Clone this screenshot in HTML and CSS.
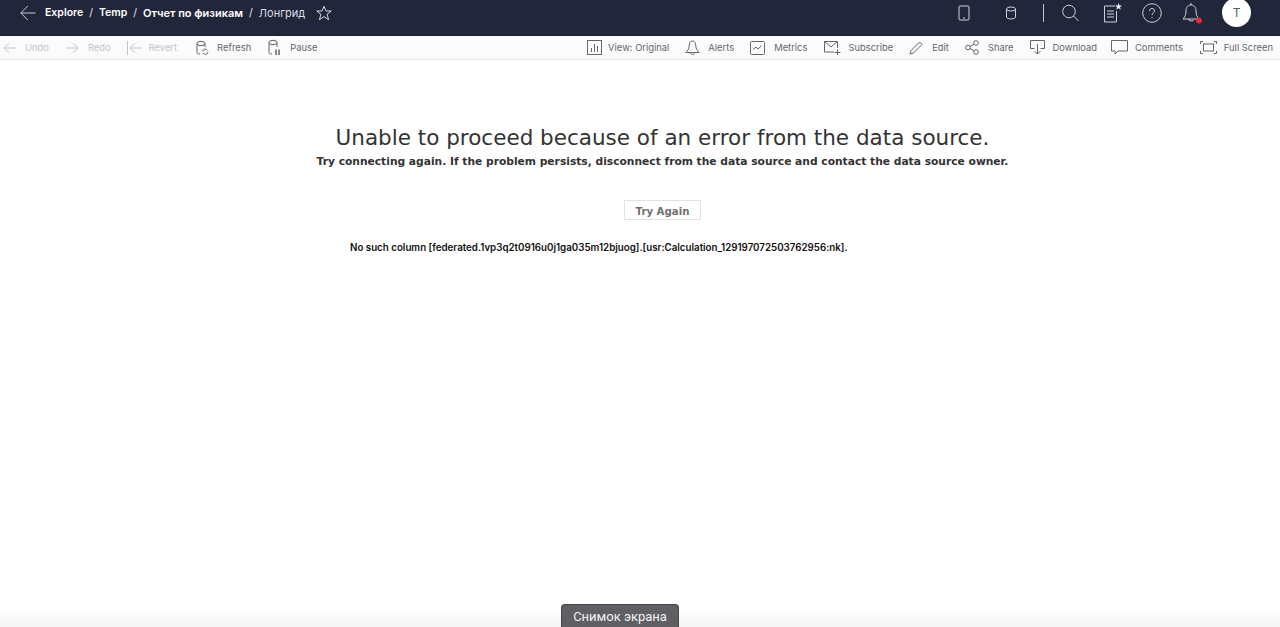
FILE: index.html
```html
<!DOCTYPE html>
<html lang="en">
<head>
<meta charset="utf-8">
<title>Лонгрид</title>
<link rel="stylesheet" href="styles.css">
</head>
<body>
<header class="topbar">
  <div class="crumbs">
    <svg class="back" width="16" height="16" viewBox="0 0 16 16"><path d="M15.500 8H.8M7.800 1 .8 8l7 7" /></svg>
    <b>Explore</b><span class="sep">/</span><b>Temp</b><span class="sep">/</span><b class="cy">Отчет по физикам</b><span class="sep">/</span><span class="page cy">Лонгрид</span>
    <svg class="star" width="16" height="16" viewBox="0 0 16 16"><path d="M8 1.200 10 6h5.200l-4.100 3.300 1.500 5.400L8 11.600l-4.600 3.100 1.500-5.400L.8 6H6z"/></svg>
  </div>
  <div class="top-icons">
    <svg class="ti-phone" width="12" height="16" viewBox="0 0 12 16"><rect x="1" y="1" width="10" height="14" rx="1"/><path d="M5 13h2"/></svg>
    <svg class="ti-db" width="12" height="14" viewBox="0 0 12 14"><ellipse cx="6" cy="3" rx="4.500" ry="2"/><path d="M1.500 3v8c0 1 2 2 4.500 2s4.500-1 4.500-2V3"/></svg>
    <span class="divider"></span>
    <svg class="ti-search" width="17" height="18" viewBox="0 0 17 18"><circle cx="7" cy="7.500" r="6.300"/><path d="m11.500 12 5 5"/></svg>
    <svg class="ti-list" width="20" height="20" viewBox="0 0 20 20"><path d="M12 3H1.500v16h12V8M4 8h7M4 11h7M4 14h7"/><path class="fill" d="m15.500 0 1 2.500h2.500l-2 1.700.8 2.600-2.300-1.500-2.300 1.500.8-2.600-2-1.700h2.500z"/></svg>
    <svg class="ti-help" width="20" height="20" viewBox="0 0 20 20"><circle cx="10" cy="10" r="9.300"/><path d="M7.500 8c0-1.500 1-2.500 2.500-2.500s2.500 1 2.500 2.300c0 2-2.500 2-2.500 4.200M10 14v1.200"/></svg>
    <svg class="ti-bell" width="20" height="22" viewBox="0 0 20 22"><path d="M9 1v2M9 3C5.500 3 4 5.500 4 9c0 3.500-1 6-3 8h16c-2-2-3-4.500-3-8 0-3.500-1.500-6-5-6zM6.500 17c0 2 3 2.500 5 1.500"/><circle class="dot" cx="17" cy="18.500" r="3"/></svg>
    <span class="avatar">T</span>
  </div>
</header>
<nav class="toolbar">
  <div class="group">
    <span class="tool off undo"><svg width="13" height="12" viewBox="0 0 13 12"><path d="M13 6H1M6 1 1 6l5 5"/></svg>Undo</span>
    <span class="tool off redo"><svg width="13" height="12" viewBox="0 0 13 12"><path d="M0 6h12M7 1l5 5-5 5"/></svg>Redo</span>
    <span class="tool off revert"><svg width="15" height="14" viewBox="0 0 15 14"><path d="M.5 0v14M15 7H3M8 2 3 7l5 5"/></svg>Revert</span>
    <span class="tool refresh"><svg width="13" height="16" viewBox="0 0 13 16"><path d="M1 3.500v9c0 1 1 1.500 3 1.500M9 3.500V7"/><ellipse cx="5" cy="3.500" rx="4" ry="2.200"/><path d="M6.500 11.500a2.700 2.700 0 0 1 5-1M12 12a2.700 2.700 0 0 1-5 1"/></svg>Refresh</span>
    <span class="tool pause"><svg width="13" height="17" viewBox="0 0 13 17"><path d="M1 3.500v10c0 1 1 1.500 3 1.500M9 3.500V8"/><ellipse cx="5" cy="3.500" rx="4" ry="2.200"/><path class="thick" d="M8 10.500V16M11 10.500V16"/></svg>Pause</span>
  </div>
  <div class="group">
    <span class="tool view"><svg width="15" height="15" viewBox="0 0 15 15"><rect x=".5" y=".5" width="14" height="14"/><path d="M4.500 8v4M7.500 4v8M10.500 6v6"/></svg>View: Original</span>
    <span class="tool alerts"><svg width="15" height="15" viewBox="0 0 15 15"><path d="M7.500 1C5 1 4.500 3 4.200 6 4 9 2.500 11 .8 12.500h13.400C12.500 11 11 9 10.800 6 10.500 3 10 1 7.500 1zM5.500 12.500c0 1.500 1 2 2 2s2-.5 2-2"/></svg>Alerts</span>
    <span class="tool metrics"><svg width="15" height="14" viewBox="0 0 15 14"><rect x=".5" y=".5" width="14" height="13" rx="1"/><path d="m3.500 8.500 2.500-2.500 2 2 3.500-3.500"/></svg>Metrics</span>
    <span class="tool subscribe"><svg width="17" height="14" viewBox="0 0 17 14"><path d="M10 11H.5V.5h13V7M.5.5 7 6l6.500-5.500M13.500 8.500v5.500M10.500 11.500h6"/></svg>Subscribe</span>
    <span class="tool edit"><svg width="14" height="14" viewBox="0 0 14 14"><path d="m1 13 .8-3.200L10.500 1l2.500 2.500-8.800 8.700z"/></svg>Edit</span>
    <span class="tool share"><svg width="15" height="15" viewBox="0 0 15 15"><circle cx="3" cy="7.500" r="2.300"/><circle cx="11" cy="3" r="2.300"/><circle cx="11" cy="12" r="2.300"/><path d="m5 6.500 4-2.300M5 8.500l4 2.300"/></svg>Share</span>
    <span class="tool download"><svg width="15" height="15" viewBox="0 0 15 15"><path d="M4.500 8.500h-4V.5h14v8h-4M7.500 4v10M4.500 11l3 3 3-3"/></svg>Download</span>
    <span class="tool comments"><svg width="17" height="15" viewBox="0 0 17 15"><path d="M.5.500h16v10.500H7l-3 3v-3H.5z"/></svg>Comments</span>
    <span class="tool full"><svg width="17" height="13" viewBox="0 0 17 13"><path d="M3 .5H.5V3M14 .5h2.500V3M3 12.500H.5V10M14 12.500h2.500V10"/><rect x="3.500" y="3" width="10" height="7"/></svg>Full Screen</span>
  </div>
</nav>
<main class="content">
  <h1>Unable to proceed because of an error from the data source.</h1>
  <p class="hint">Try connecting again. If the problem persists, disconnect from the data source and contact the data source owner.</p>
  <button class="retry" type="button">Try Again</button>
  <p class="detail">No such column [federated.1vp3q2t0916u0j1ga035m12bjuog].[usr:Calculation_129197072503762956:nk].</p>
</main>
<div class="shade"></div>
<div class="snapshot">Снимок экрана</div>
</body>
</html>
```
FILE: styles.css
```css
* { box-sizing: border-box; }
html, body { height: 100%; }
body {
  margin: 0;
  overflow: hidden;
  background: #fff;
  font-family: "Inter", "Liberation Sans", sans-serif;
  display: flex;
  flex-direction: column;
  position: relative;
}
svg { flex: none; fill: none; stroke: currentColor; stroke-width: 1; }
.topbar {
  height: 36px;
  flex: none;
  background: #22263a;
  color: #fff;
  display: flex;
  align-items: center;
  justify-content: space-between;
  padding: 0 29px 10px 20px;
  border-bottom: 1px solid #1b1e2f;
  overflow: hidden;
}
.crumbs { display: flex; align-items: center; font-size: 10.500px; }
.crumbs b { font-weight: 600; }
.crumbs .cy { font-size: 11px; }
.back { margin-right: 9px; color: #c9cbd2; }
.sep { margin: 0 6px; color: #e4e5e9; }
.page { color: #dcdde2; font-weight: 400; }
.star { margin-left: 11px; color: #d8d9de; }
.top-icons { display: flex; align-items: center; color: #cfd1d8; }
.ti-db { margin-left: 35px; }
.divider { width: 1px; height: 18px; background: #c2c4cc; margin-left: 26px; }
.ti-search { margin-left: 18px; }
.ti-list { margin-left: 24px; }
.ti-list .fill { fill: #e8e9ed; stroke: none; }
.ti-help { margin-left: 19px; }
.ti-bell { margin-left: 20px; }
.ti-bell .dot { fill: #e0283c; stroke: none; }
.avatar {
  width: 29px;
  height: 29px;
  margin-left: 20px;
  border-radius: 50%;
  background: #fff;
  color: #555a66;
  font-size: 12px;
  display: flex;
  flex: none;
  align-items: center;
  justify-content: center;
}
.toolbar {
  height: 24px;
  flex: none;
  background: #fbfbfb;
  border-bottom: 1px solid #e4e4e4;
  display: flex;
  align-items: center;
  justify-content: space-between;
  padding: 0 7px 0 3px;
  color: #666;
  font-size: 9.400px;
}
.group { display: flex; align-items: center; }
.tool { display: flex; align-items: center; gap: 9px; white-space: nowrap; }
.tool.off { color: #c4c4c4; }
.revert, .subscribe, .comments, .full { gap: 7px; }
.view { gap: 6px; }
.refresh, .alerts, .share, .download { gap: 8px; }
.redo { margin-left: 17px; }
.revert { margin-left: 16px; }
.refresh { margin-left: 19px; }
.pause { margin-left: 17px; }
.alerts { margin-left: 16px; }
.metrics { margin-left: 16px; }
.subscribe { margin-left: 17px; }
.edit { margin-left: 16px; }
.share { margin-left: 16px; }
.download { margin-left: 16px; }
.comments { margin-left: 14px; }
.full { margin-left: 17px; }
.thick { stroke-width: 1.500; }
.content {
  flex: 1;
  display: flex;
  flex-direction: column;
  align-items: center;
  padding-top: 64px;
  padding-left: 45px;
}
h1 {
  margin: 0;
  font: 400 21.500px/28px "DejaVu Sans", sans-serif;
  color: #333;
  white-space: nowrap;
}
.hint {
  margin: 3px 0 0;
  font: 700 10.700px/14px "DejaVu Sans", sans-serif;
  color: #333;
  white-space: nowrap;
}
.retry {
  margin-top: 31px;
  width: 77px;
  height: 20px;
  padding: 3px 0 0;
  background: #fff;
  border: 1px solid #e2e2e2;
  font: 700 10.200px/15px "DejaVu Sans", sans-serif;
  color: #707070;
}
.detail {
  margin: 21px 0 0 305px;
  align-self: flex-start;
  font-size: 9.750px;
  line-height: 14px;
  font-weight: 600;
  color: #111;
  white-space: nowrap;
}
.shade {
  position: absolute;
  left: 0;
  right: 0;
  bottom: 0;
  height: 18px;
  background: linear-gradient(#ffffff, #f5f5f5);
}
.snapshot {
  position: absolute;
  left: 561px;
  bottom: 0;
  width: 118px;
  height: 23px;
  border: 1px solid #46464a;
  border-bottom: 0;
  border-radius: 4px 4px 0 0;
  background: #5f5f64;
  color: #f2f2f2;
  font: 400 13px/24px "Roboto", sans-serif;
  text-align: center;
}
```
